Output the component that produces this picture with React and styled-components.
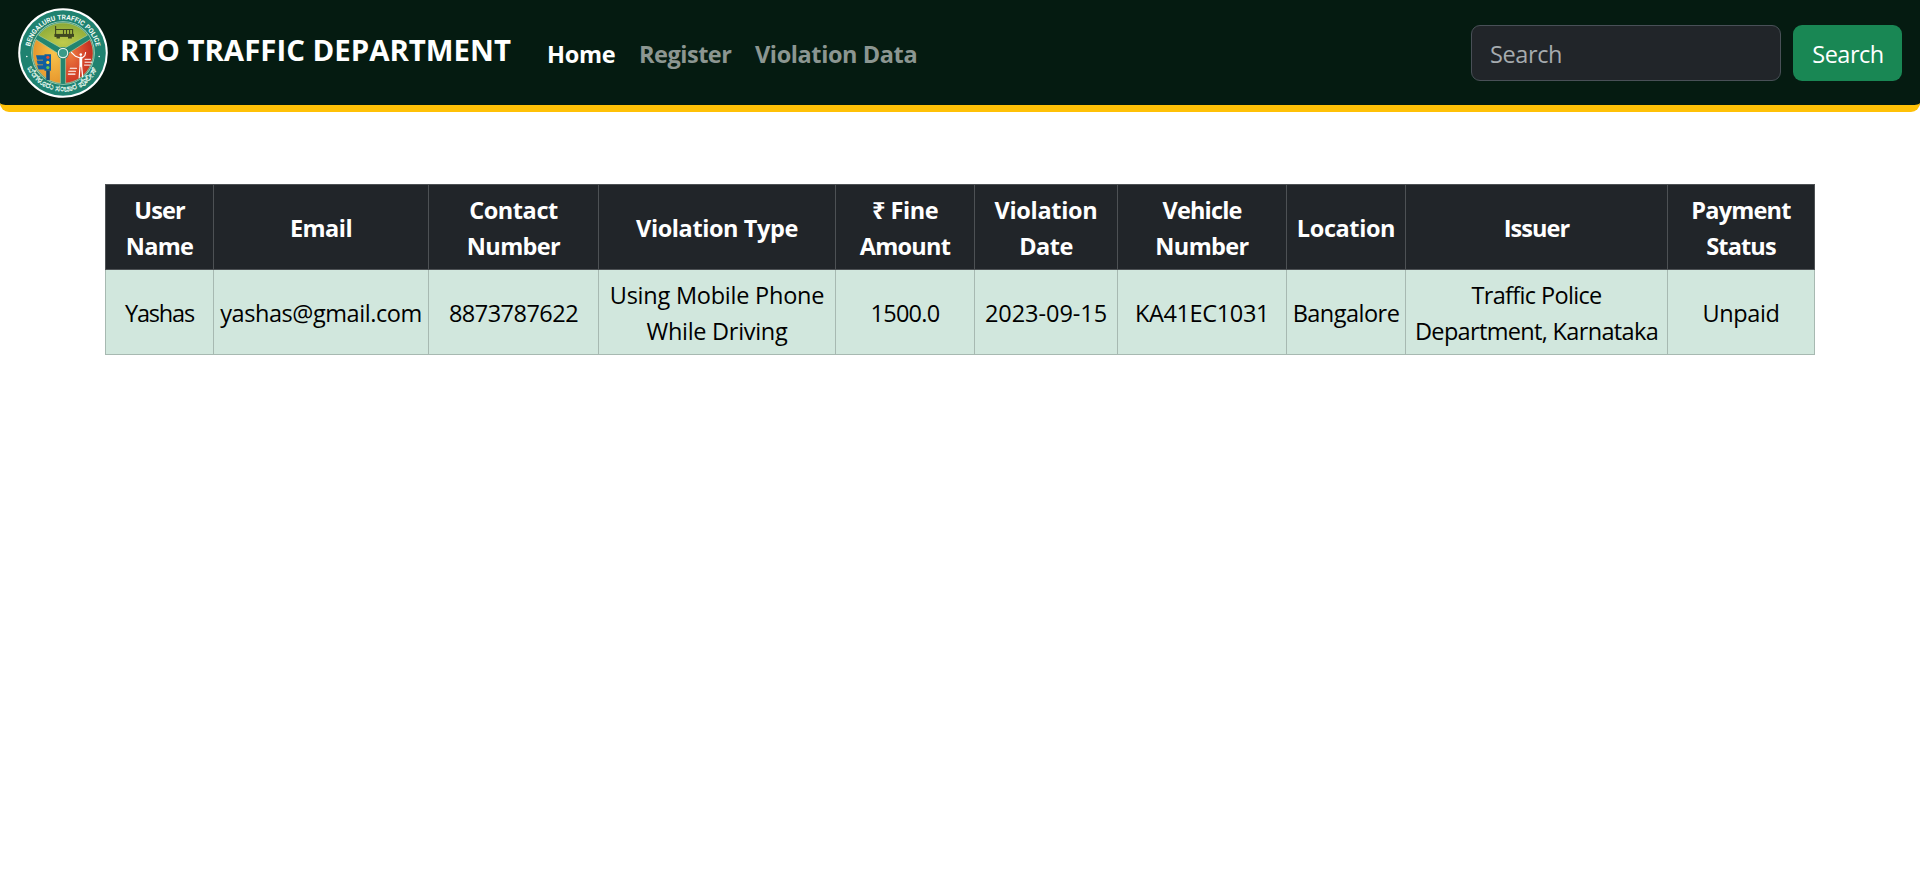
import React from "react";
import styled, { createGlobalStyle } from "styled-components";

const sans = '"Open Sans", "Noto Sans", sans-serif';

const GlobalStyle = createGlobalStyle`
  *, *::before, *::after { box-sizing: border-box; }
  body {
    margin: 0;
    background: #fff;
    color: #000;
    font-family: ${sans};
    font-size: 23.5px;
    line-height: 36px;
  }
`;

const Navbar = styled.header`
  display: flex;
  align-items: center;
  height: 112px;
  padding: 0 18px;
  background: #051b11;
  border-bottom: 7px solid #ffc107;
  border-radius: 0 0 9px 9px;
`;

const Brand = styled.a`
  display: flex;
  align-items: center;
  width: 517px;
  color: #fff;
  text-decoration: none;
`;

const BrandName = styled.span`
  margin: 0 0 5px 12px;
  font-size: 29.4px;
  font-weight: 700;
  line-height: 45px;
  white-space: nowrap;
`;

const NavLinks = styled.nav`
  display: flex;
  flex: 1;
  padding-top: 2px;
`;

const NavLink = styled.a`
  width: ${(p) => p.$width}px;
  padding-left: 12px;
  color: ${(p) => (p.$active ? "#fff" : "#8c9691")};
  font-weight: 700;
  letter-spacing: ${(p) => p.$track}px;
  text-decoration: none;
  white-space: nowrap;
`;

const SearchForm = styled.form`
  display: flex;
  gap: 12px;
`;

const SearchInput = styled.input`
  width: 310px;
  height: 56px;
  padding: 2px 18px 0;
  color: #dee2e6;
  background: #212529;
  border: 1px solid #495057;
  border-radius: 9px;
  font: inherit;
  letter-spacing: -0.4px;
  &::placeholder { color: #a6abaf; opacity: 1; }
`;

const SearchButton = styled.button`
  width: 109px;
  height: 56px;
  padding: 2px 0 0 1px;
  color: #fff;
  background: #198754;
  border: 0;
  border-radius: 9px;
  font: inherit;
  letter-spacing: -0.5px;
`;

const Main = styled.main`
  padding: 72px 105px 0;
`;

const Table = styled.table`
  width: 1710px;
  table-layout: fixed;
  border-collapse: collapse;
  text-align: center;
`;

const Col = styled.col`
  width: ${(p) => p.$width}px;
`;

const HeadCell = styled.th`
  height: 85px;
  padding: 7px 0 5px;
  color: #fff;
  background: #212529;
  border: 1px solid #4d5154;
  font-weight: 700;
  vertical-align: middle;
`;

const Cell = styled.td`
  height: 85px;
  padding: 7px 0 5px;
  background: #d1e7dd;
  border: 1px solid #a7b9b1;
  vertical-align: middle;
`;

const Line = styled.div`
  letter-spacing: ${(p) => p.$track}px;
  white-space: nowrap;
`;

const links = [
  { text: "Home", track: -0.3, width: 92, active: true },
  { text: "Register", track: -0.48, width: 116 },
  { text: "Violation Data", track: -0.4, width: 186 },
];

const columns = [
  { width: 108, head: [["User", -0.9], ["Name", -0.7]], cell: [["Yashas", -1.2]] },
  { width: 215, head: [["Email", -0.55]], cell: [["yashas@gmail.com", -0.43]] },
  { width: 170, head: [["Contact", -0.43], ["Number", -0.63]], cell: [["8873787622", -0.52]] },
  { width: 237, head: [["Violation Type", -0.4]], cell: [["Using Mobile Phone", -0.23], ["While Driving", -0.3]] },
  { width: 139, head: [["₹ Fine", -0.45], ["Amount", -0.7]], cell: [["1500.0", -0.7]] },
  { width: 143, head: [["Violation", -0.3], ["Date", -0.55]], cell: [["2023-09-15", -0.05]] },
  { width: 169, head: [["Vehicle", -0.83], ["Number", -0.63]], cell: [["KA41EC1031", -0.35]] },
  { width: 119, head: [["Location", -0.4]], cell: [["Bangalore", -0.51]] },
  { width: 262, head: [["Issuer", -0.9]], cell: [["Traffic Police", -0.65], ["Department, Karnataka", -0.66]] },
  { width: 147, head: [["Payment", -0.8], ["Status", -0.88]], cell: [["Unpaid", -0.4]] },
];

const Lines = ({ items }) => items.map(([text, track]) => <Line key={text} $track={track}>{text}</Line>);

const Emblem = () => (
  <svg width="90" height="90" viewBox="0 0 90 90" aria-hidden="true">
    <defs>
      <radialGradient id="green" cx="0.5" cy="0.75" r="0.7">
        <stop offset="0" stopColor="#c0cb4c" />
        <stop offset="1" stopColor="#8caa38" />
      </radialGradient>
      <radialGradient id="orange" cx="0.75" cy="0.3" r="0.9">
        <stop offset="0" stopColor="#f8c44c" />
        <stop offset="1" stopColor="#e38b25" />
      </radialGradient>
      <radialGradient id="red" cx="0.2" cy="0.35" r="0.85">
        <stop offset="0" stopColor="#ec7a3c" />
        <stop offset="0.6" stopColor="#d4432a" />
        <stop offset="1" stopColor="#bb2a1e" />
      </radialGradient>
      <path id="arcTop" d="M11.5 45 A33.5 33.5 0 0 1 78.5 45" />
      <path id="arcBottom" d="M6.6 45 A38.4 38.4 0 0 0 83.4 45" />
    </defs>
    <circle cx="45" cy="45" r="44.8" fill="#fff" />
    <circle cx="45" cy="45" r="42.8" fill="#1f8270" />
    <circle cx="45" cy="45" r="31.8" fill="#a9d5bd" />
    <circle cx="45" cy="45" r="31" fill="#23856f" />
    <g stroke="#a8cfa0" strokeWidth="0.7">
      <path d="M45 41 L20.6 27.2 A30.3 30.3 0 0 1 69.4 27.2 Z" fill="url(#green)" />
      <path d="M42.4 47 L42.4 75.2 A30.3 30.3 0 0 1 18 31.6 Z" fill="url(#orange)" />
      <path d="M47.6 47 L47.6 75.2 A30.3 30.3 0 0 0 72 31.6 Z" fill="url(#red)" />
    </g>
    <circle cx="45" cy="45" r="6" fill="#1f8270" />
    <circle cx="45" cy="45" r="4.7" fill="#3a9a88" stroke="#e4f1e9" strokeWidth="1.2" />
    <g fill="none" stroke="#3f4720" strokeWidth="1.1">
      <path d="M37.6 18 V29" />
      <path d="M37.6 21.5 H45 M45.5 27 V21.5 H54.6 V27 M48.5 22 V26 M51.6 22 V26" />
      <path d="M36.4 27.4 H56" strokeWidth="3" />
    </g>
    <path d="M38.5 28 h3.4 v2.4 h-3.4 z M50 28 h3.8 v2.4 h-3.8 z" fill="#3f4720" />
    <g>
      <path d="M18 47.2 h8.5 v-1 h6.5 v16.5 h-6.5 v-1.2 h-6 l-1.5 -4.3 h6 v-0.8 h-5.2 l-1.2 -3.8 h6.4 v-0.9 h-5.8 z" fill="#105f9f" />
      <path d="M28.2 62.5 h3.6 v9.5 h-3.6 z" fill="#164c75" />
      <circle cx="29.8" cy="49.3" r="1.6" fill="#e94b2d" />
      <circle cx="29.8" cy="54.4" r="1.6" fill="#ffd83b" />
      <circle cx="29.8" cy="59.6" r="1.6" fill="#62c552" />
    </g>
    <g fill="none" stroke="#fff" strokeLinecap="round">
      <circle cx="62.8" cy="46.6" r="1.3" fill="#fff" stroke="none" />
      <path d="M62.8 50 V57.5" strokeWidth="2.8" />
      <path d="M61.5 49.8 L57.5 48.3 L53.5 44.5 M64 50 L66.8 47.8 L67.6 44.5" strokeWidth="1.1" />
      <path d="M62 58 L61.2 69.5 M63.6 58 L64.6 68.5" strokeWidth="1.2" />
      <path d="M67 51.3 H72.5 M67 54.2 H74 M66.5 57.1 H72" strokeWidth="1" />
      <path d="M52.3 60.3 H58.5 M50.8 63.2 H57.5 M50.3 66.1 H57" strokeWidth="1.1" />
    </g>
    <text fill="#f2faf5" fontFamily="Roboto, sans-serif" fontSize="6.8" fontWeight="700" textAnchor="middle">
      <textPath href="#arcTop" startOffset="50%">BENGALURU TRAFFIC POLICE</textPath>
    </text>
    <text fill="#dcefe5" fontFamily="sans-serif" fontSize="9" fontWeight="700" textAnchor="middle">
      <textPath href="#arcBottom" startOffset="50%">ಬೆಂಗಳೂರು ಸಂಚಾರ ಪೊಲೀಸ್</textPath>
    </text>
    <circle cx="8.8" cy="48.5" r="0.8" fill="#fff" />
    <circle cx="81.2" cy="48.5" r="0.8" fill="#fff" />
  </svg>
);

export default function App() {
  return (
    <>
      <GlobalStyle />
      <Navbar>
        <Brand href="#">
          <Emblem />
          <BrandName>RTO TRAFFIC DEPARTMENT</BrandName>
        </Brand>
        <NavLinks>
          {links.map((l) => (
            <NavLink key={l.text} href="#" $active={l.active} $track={l.track} $width={l.width}>
              {l.text}
            </NavLink>
          ))}
        </NavLinks>
        <SearchForm>
          <SearchInput type="search" placeholder="Search" aria-label="Search" />
          <SearchButton type="button">Search</SearchButton>
        </SearchForm>
      </Navbar>
      <Main>
        <Table>
          <colgroup>
            {columns.map((c, i) => <Col key={i} $width={c.width} />)}
          </colgroup>
          <thead>
            <tr>
              {columns.map((c, i) => <HeadCell key={i}><Lines items={c.head} /></HeadCell>)}
            </tr>
          </thead>
          <tbody>
            <tr>
              {columns.map((c, i) => <Cell key={i}><Lines items={c.cell} /></Cell>)}
            </tr>
          </tbody>
        </Table>
      </Main>
    </>
  );
}
